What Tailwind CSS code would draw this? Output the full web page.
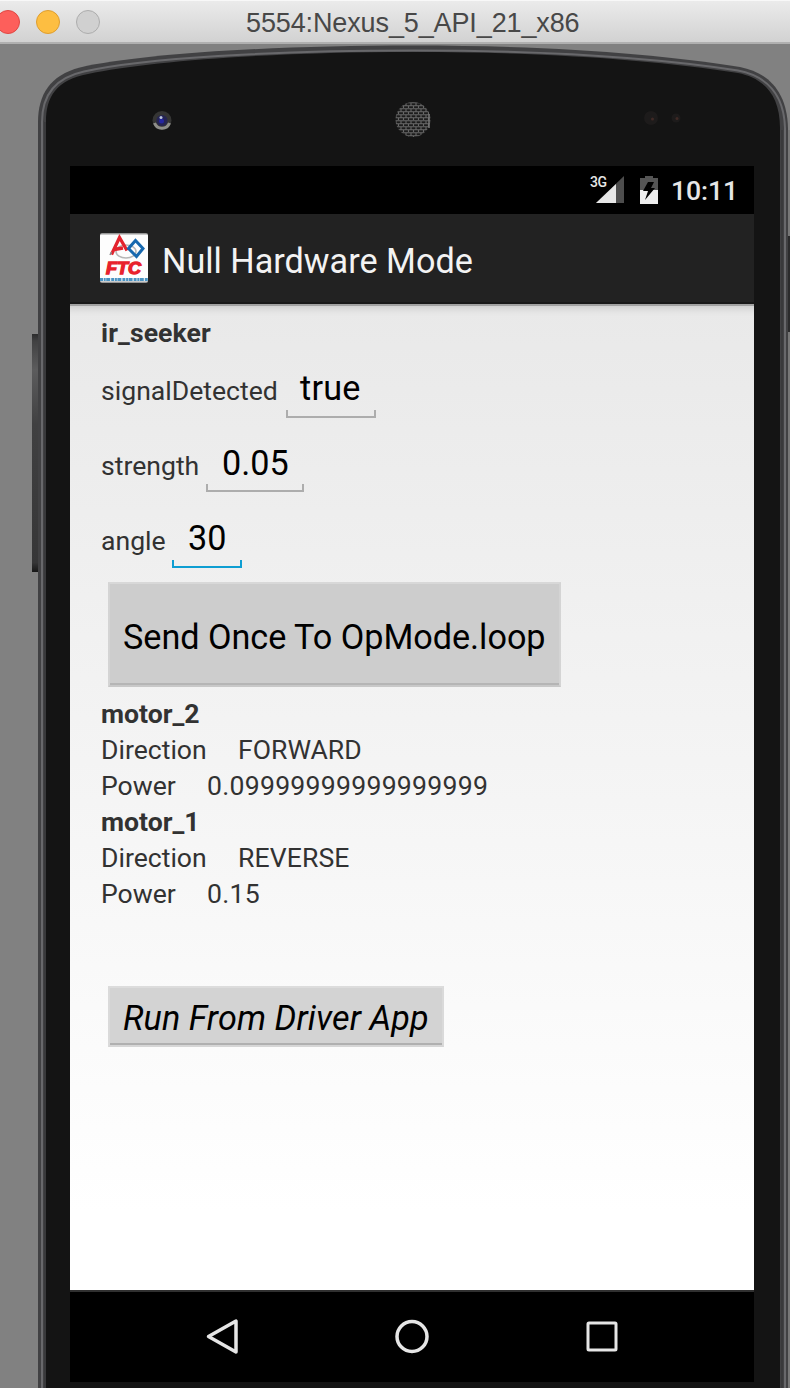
<!DOCTYPE html>
<html lang="en">
<head>
<meta charset="utf-8">
<title>5554:Nexus_5_API_21_x86</title>
<script src="https://cdn.jsdelivr.net/npm/@tailwindcss/browser@4"></script>
</head>
<body class="w-[790px] h-[1388px] overflow-hidden bg-[#818181] font-['Roboto',sans-serif] flex flex-col">

<!-- Window title bar -->
<header class="relative h-11 shrink-0 bg-linear-to-b from-[#ebebeb] to-[#d2d2d2] border-t border-t-[#f8f8f8] border-b-2 border-b-[#b0b0b0] flex items-center overflow-hidden">
  <div class="flex gap-4 -ml-1 shrink-0">
    <span class="size-6 rounded-full bg-[#fd5f5b] border border-[#e04743]"></span>
    <span class="size-6 rounded-full bg-[#fdbe41] border border-[#df9e2f]"></span>
    <span class="size-6 rounded-full bg-[#d0d0d0] border border-[#adadad]"></span>
  </div>
  <h1 class="ml-[146px] mt-[3px] text-[27px] leading-8 tracking-[-0.120px] text-[#484848] whitespace-nowrap font-['Liberation_Sans',sans-serif]">5554:Nexus_5_API_21_x86</h1>
</header>

<main class="relative h-[1344px] shrink-0">
  <!-- Device body -->
  <svg class="absolute inset-0" width="790" height="1344" viewBox="0 44 790 1344" aria-hidden="true">
    <defs>
      <linearGradient id="key" x1="0" y1="0" x2="0" y2="1">
        <stop offset="0" stop-color="#2c2c2d"/><stop offset=".03" stop-color="#414142"/><stop offset=".15" stop-color="#5c5c5d"/><stop offset=".38" stop-color="#404041"/><stop offset=".96" stop-color="#363637"/><stop offset="1" stop-color="#171717"/>
      </linearGradient>
      <pattern id="mesh" width="5" height="6" patternUnits="userSpaceOnUse">
        <path d="M0 .8h5M0 3.800h5M1 1v3M3.500 4v3" stroke="#676767" stroke-width="1.100"/>
      </pattern>
    </defs>
    <rect x="32" y="334" width="8" height="238" fill="url(#key)"/>
    <rect x="787" y="236" width="3" height="96" fill="#2b2b2c"/>
    <path d="M38 1390V122C38 95 50 75 80 67.500C140 54 270 45.500 413 45.500C550 45.500 660 54 740 67C770 73 787 93 788 128V1390Z" fill="#414143"/>
    <path d="M42 1390V122C42 97 54 78 84 71.500C144 58 272 50.500 413 50.500C548 50.500 656 58 738 70.500C767 76 784 95 785 128V1390" fill="none" stroke="#68686b" stroke-width="2"/>
    <path d="M46 1390V122C46 97 56 80 88 74C148 61 275 52 413 52C546 52 654 60 738 73C763 78 780 94 780 128V1390Z" fill="#141414"/>
    <path d="M45 1390V122M782 1390V130" stroke="#37373a" stroke-width="1.500"/>
    <path d="M789 332V1390M789 130V236" stroke="#777" stroke-width="2"/>
    <circle cx="162" cy="120.500" r="9.500" fill="#353534"/>
    <path d="M154.500 123a8 8 0 0 0 15 0" fill="none" stroke="#8e8e8a" stroke-width="3"/>
    <circle cx="162" cy="120.500" r="5.500" fill="#252452"/>
    <circle cx="161.500" cy="121" r="2.500" fill="#2525a0"/>
    <circle cx="161" cy="117.500" r="1.500" fill="#b8c3dc"/>
    <circle cx="413" cy="119.500" r="17.500" fill="#1c1c1c"/>
    <circle cx="413" cy="119.500" r="17.500" fill="url(#mesh)"/>
    <path d="M429 114v14" stroke="#777" stroke-width="1.500"/>
    <circle cx="651" cy="118" r="7" fill="#1d1b1b"/><circle cx="652.500" cy="119" r="1.500" fill="#3f2925"/>
    <circle cx="676" cy="118" r="4.500" fill="#1d1b1b"/><circle cx="677" cy="118.500" r="1.500" fill="#3f2925"/>
  </svg>

  <!-- Screen -->
  <div class="relative ml-[70px] pt-[122px] w-[684px] flex flex-col">
    <div class="h-12 bg-black flex items-center justify-end pr-4 text-[#e6e6e6]">
      <svg width="36" height="30" viewBox="0 0 36 30" class="mr-[15px]" aria-hidden="true">
        <path d="M7 28L35 1V28Z" fill="#4d4d4d"/><path d="M7 28L27 9V28Z" fill="#e6e6e6"/>
        <text x="1" y="12" font-family="Roboto" font-weight="500" font-size="14" letter-spacing="-.5" fill="#e6e6e6" stroke="#000" stroke-width="2" paint-order="stroke">3G</text>
      </svg>
      <svg width="18" height="28" viewBox="0 0 18 28" class="mr-[13.500px]" aria-hidden="true">
        <path d="M5 0h8v2h5v12H0V2h5Z" fill="#555"/><path d="M0 14h18v14H0Z" fill="#eee"/>
        <path d="M8 6h6l-3 6h4L5 24l3-9H3Z" fill="#000"/>
      </svg>
      <span class="text-[26.600px] leading-9 font-medium tracking-[-0.100px] mt-0.5">10:11</span>
    </div>

    <div class="relative h-[90px] bg-[#222] border-b-2 border-b-[#191919] flex items-center pl-[30px]">
      <svg width="48" height="50" viewBox="0 0 48 50" aria-label="FTC" role="img">
        <rect width="48" height="50" rx="2" fill="#979797"/><rect y="1.500" width="48" height="47" rx="1" fill="#fdfdfd"/>
        <ellipse cx="26" cy="18.500" rx="10" ry="6.500" fill="none" stroke="#b6b6b6" stroke-width="1.600"/>
        <path d="M11.500 21.500L19.500 4.500L27 17.500M14 16.500L23 15" fill="none" stroke="#e3232e" stroke-width="3.300"/>
        <path d="M10 22l1.500-3" stroke="#888" stroke-width="1.500"/>
        <path d="M35.500 7.500L43 15.500L36.500 23.500L28.500 15.500Z" fill="none" stroke="#1768ae" stroke-width="3"/>
        <text x="6" y="40.500" font-family="Liberation Sans" font-weight="700" font-style="italic" font-size="17" textLength="35" lengthAdjust="spacingAndGlyphs" fill="#e8212c" stroke="#e8212c" stroke-width="1.300">FTC</text>
        <path d="M0 46.500H48" stroke="#4b93c2" stroke-width="3" stroke-dasharray="3 .7 2 .5 4 1"/>
      </svg>
      <h2 class="ml-3.5 mt-[5px] text-[34.200px] leading-10 text-[#f3f3f3] whitespace-nowrap">Null Hardware Mode</h2>
    </div>

    <div class="h-[986px] bg-linear-to-b from-[#e9e9e9] to-white to-92% shadow-[inset_0_2px_0_#a2a2a2,inset_0_12px_8px_-8px_rgba(0,0,0,.14)] pl-[30px] pt-[11px] text-[26.600px] leading-9 tracking-[0.100px] text-[#323232] whitespace-nowrap">
      <p class="font-bold tracking-[0.090px] pl-px">ir_seeker</p>
      <div class="h-[75px] pt-[17px] flex items-baseline">
        <span class="tracking-normal pl-px">signalDetected</span>
        <span class="relative ml-auto mr-[378px] w-[90px] h-[50px] pl-3.5 text-[34.200px] leading-10 tracking-[0.200px] text-black">true<i class="absolute inset-x-0 bottom-0 h-2 border-2 border-t-0 border-[#adadad]"></i></span>
      </div>
      <div class="h-[75px] pt-[17px] flex items-baseline">
        <span class="tracking-normal pl-px">strength</span>
        <span class="relative ml-auto mr-[450px] w-[98px] h-[49px] pl-4 text-[34.200px] leading-10 tracking-normal text-black">0.05<i class="absolute inset-x-0 bottom-0 h-2 border-2 border-t-0 border-[#adadad]"></i></span>
      </div>
      <div class="h-[75px] pt-[17px] flex items-baseline">
        <span class="tracking-normal pl-px">angle</span>
        <span class="relative ml-auto mr-[512px] w-[70px] h-[50px] pl-4 text-[34.200px] leading-10 tracking-normal text-black">30<i class="absolute inset-x-0 bottom-0 h-2 border-2 border-t-0 border-[#0e9ed2]"></i></span>
      </div>
      <button class="block mt-[6px] ml-2 w-[453px] h-[105px] bg-[#cdcdcd] border-2 border-t-[#d8d8d8] border-x-[#d4d4d4] border-b-[#c8c8c8] shadow-[inset_0_-2px_0_#b5b5b5] text-left pl-[13px] pt-1 text-[34.200px] leading-10 tracking-[-0.020px] text-black">Send Once To OpMode.loop</button>
      <div class="mt-[9px] leading-[36.100px] pl-px">
        <p class="font-bold tracking-normal">motor_2</p>
        <div class="flex"><span class="w-[137px] tracking-normal">Direction</span><span class="tracking-normal">FORWARD</span></div>
        <div class="flex"><span class="w-[106px] tracking-normal">Power</span><span class="tracking-[0.270px]">0.09999999999999999</span></div>
        <p class="font-bold tracking-normal">motor_1</p>
        <div class="flex"><span class="w-[137px] tracking-normal">Direction</span><span>REVERSE</span></div>
        <div class="flex"><span class="w-[106px] tracking-normal">Power</span><span class="tracking-[0.270px]">0.15</span></div>
      </div>
      <button class="block mt-[73.400px] ml-2 w-[336px] h-[61px] bg-[#d3d3d3] border-2 border-t-[#dcdcdc] border-x-[#dadada] border-b-[#d6d6d6] shadow-[inset_0_-2px_0_#b0b0b0] text-left pl-[13px] pt-[3px] text-[34.200px] leading-10 italic tracking-[0.110px] text-black">Run From Driver App</button>
    </div>

    <nav class="h-[92px] bg-black border-t-2 border-t-[#303030] flex items-center">
      <svg width="684" height="90" viewBox="70 1292 684 90" fill="none" stroke="#e6e6e6" stroke-width="3.500" aria-label="Back, Home, Overview">
        <path d="M208.500 1336.500L236 1321V1352Z" stroke-linejoin="round"/>
        <circle cx="412" cy="1336.500" r="15"/>
        <rect x="588" y="1323" width="28" height="27" rx="1" stroke-width="3"/>
      </svg>
    </nav>
  </div>
</main>
</body>
</html>
